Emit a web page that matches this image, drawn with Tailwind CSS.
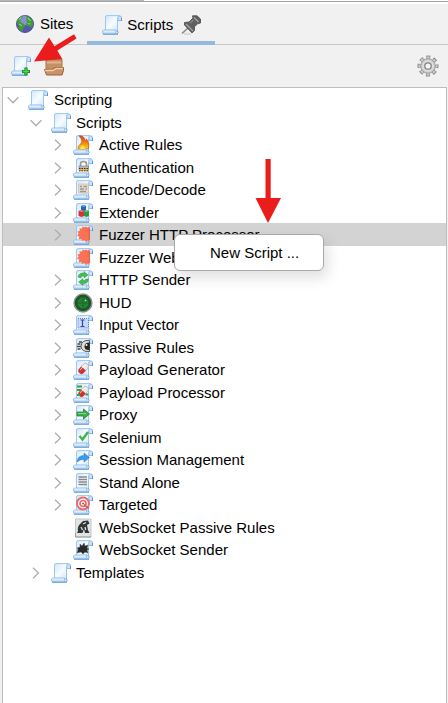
<!DOCTYPE html>
<html lang="en">
<head>
<meta charset="utf-8">
<title>Scripts</title>
<script src="https://cdn.jsdelivr.net/npm/@tailwindcss/browser@4"></script>
</head>
<body class="relative flex min-h-screen flex-col overflow-x-hidden bg-[#f1f1f1] font-['Liberation_Sans',Arial,sans-serif] text-[15px] leading-5 text-black">

<svg class="absolute size-0" aria-hidden="true">
  <defs>
    <linearGradient id="paper" x1="0" y1="0" x2="1" y2="1"><stop offset="0" stop-color="#d3e6f8"/><stop offset=".5" stop-color="#f8fcff"/><stop offset="1" stop-color="#cfe4f8"/></linearGradient>
    <linearGradient id="roll" x1="0" y1="0" x2="0" y2="1"><stop offset="0" stop-color="#ffffff"/><stop offset="1" stop-color="#a9cdf2"/></linearGradient>
    <radialGradient id="radar"><stop offset="0" stop-color="#2f9440"/><stop offset="1" stop-color="#0d4a1c"/></radialGradient>
    <linearGradient id="fire" x1="0" y1="0" x2="0" y2="1"><stop offset="0" stop-color="#d8401c"/><stop offset=".5" stop-color="#ee7d12"/><stop offset="1" stop-color="#ffd51c"/></linearGradient>
  </defs>
  <symbol id="scroll" viewBox="0 0 20 20">
    <path d="M15.500 1h2.500q1.500 0 1.500 2v2.500h-3.500z" fill="#cfe3f8" stroke="#8dbcec"/>
    <path d="M19.500 3v3" stroke="#5b97d3"/>
    <path d="M5 .6h12q-1.500 1-1.500 3V16H3.500V2Q3.500.6 5 .6z" fill="url(#paper)" stroke="#9cc7f0"/>
    <path d="M1.500 15h12.500q-1 2 .5 4H2Q.5 19 .5 17.200T1.500 15z" fill="url(#roll)" stroke="#8dbcec"/>
    <path d="M1 19.300h15M15.500 15.500q1.500 3-.5 3.500" fill="none" stroke="#6ba3da"/>
  </symbol>
  <symbol id="down" viewBox="0 0 12 12"><path d="M.7 3.200 6 8.700 11.300 3.200" fill="none" stroke="#adadad" stroke-width="1.300"/></symbol>
  <symbol id="right" viewBox="0 0 12 12"><path d="M3 .7 8.500 6 3 11.300" fill="none" stroke="#adadad" stroke-width="1.300"/></symbol>
  <symbol id="burst" viewBox="0 0 20 20"><path d="M16.500 1.500v15l-2-1-2 1.500-1-2-2.500 1-.5-2-3 .2.800-2.400-2.300-1 1.500-2-1-2.300 2.300-.7-.3-2.500 2.500.2.500-2 2 .8L13 1.500l1.500 1z" fill="#fb7257"/><path d="M16.300 3v12" stroke="#e24f3a"/></symbol>
  <symbol id="pill" viewBox="0 0 20 20"><g transform="rotate(-48 10.500 8.500)"><rect x="4.500" y="5.500" width="12" height="6" rx="3" fill="#ececec" stroke="#aaa" stroke-width=".7"/><path d="M10.500 5.500h-3a3 3 0 0 0 0 6h3z" fill="#d62d2d"/><path d="M7 7h8" stroke="#fff" stroke-opacity=".6"/></g></symbol>
</svg>

<div class="flex h-1 flex-col bg-white"><div class="h-px w-36 bg-[#b8b8b8]"></div><div class="h-px bg-[#a3a3a3]"></div></div>

<nav class="flex h-[41px] border-b border-[#c9c9c9]" role="tablist">
  <button role="tab" aria-selected="false" class="flex items-center gap-1.5 pr-3.5 pl-4">
    <svg class="size-[18px]" viewBox="0 0 18 18"><circle cx="9" cy="9" r="8.500" fill="#5357b0" stroke="#4a4d94"/><circle cx="8" cy="5.500" r="5" fill="#9a9de0" opacity=".8"/><path d="M1 6Q3 1.500 7 1L6 3.500 4 5.500 5 7.500 8 9l1 2.500-2 2.500-.5 2.500Q3.500 15.500 2 12.500L3.500 11 1 8.500zM10 1q5 .5 7 6v3l-2 2.500-2-1-2-.5-1-2.500L11.500 7 10 5l1-2z" fill="#3f9b37"/><path d="M3 4.500l2.500-2M12 3l2.500 3M11.500 8.500l3 .5M3 9l3 2" stroke="#86d070" stroke-width="1.200"/></svg>
    Sites
  </button>
  <button role="tab" aria-selected="true" class="-mb-px flex items-center border-b-4 border-[#95b9de] pt-1 pr-3.5 pl-[15px]">
    <svg class="mr-[5px] size-5"><use href="#scroll"/></svg>
    Scripts
    <svg class="ml-2 size-5" viewBox="0 0 20 20"><path d="M1 18.500 7 13" stroke="#888" stroke-width="1.600"/><path d="M3 19h7" stroke="#c4c4c4"/><path d="M11.500 .8h4.500L19.500 4v4l-3 .8-3 3v3.700l-2.500 2.500L3.500 10V7.500L8 7l4-4z" fill="#5f5f5f" stroke="#484848" stroke-width=".8"/><path d="M13 2.500l4.500 4.500M5 9l7 7" stroke="#a5a5a5" stroke-width="1.400"/><path d="M9 8l3.500-3" stroke="#858585" stroke-width="1.500"/></svg>
  </button>
</nav>

<div class="flex h-[42px] items-center pr-[9px] pl-[11px]" role="toolbar">
  <button aria-label="New script"><svg class="size-5" viewBox="0 0 20 20"><use href="#scroll"/><path d="M15 11.500v8M11 15.500h8" stroke="#118d22" stroke-width="3.200"/><path d="M15 12.500v6M12 15.500h6" stroke="#48dc50" stroke-width="1.300"/></svg></button>
  <button aria-label="Load script" class="ml-[13px]"><svg class="size-5" viewBox="0 0 20 20"><path d="M2 3h16v10H2z" fill="#c78f65" stroke="#b0764b"/><path d="M3 6.500h14" stroke="#e0b48c" stroke-width="2"/><path d="M.5 13.500 8 14l3-2.500h8.500v3l-1.500 4.500H2.500z" fill="#c99268" stroke="#9b6038"/><path d="M1 14.500h8l3-2h7" fill="none" stroke="#efd0ac" stroke-width="1.300"/></svg></button>
  <button aria-label="Options" class="ml-auto"><svg class="size-[22px]" viewBox="0 0 22 22"><circle cx="11" cy="11" r="8.500" fill="none" stroke="#8b8b8b" stroke-width="4" stroke-dasharray="3.680 3" stroke-dashoffset="1.840"/><circle cx="11" cy="11" r="8.200" fill="none" stroke="#d2d2d2" stroke-width="2.600" stroke-dasharray="2.200 4.240" stroke-dashoffset="1.100"/><circle cx="11" cy="11" r="7.300" fill="#d0d0d0" stroke="#9a9a9a"/><circle cx="11" cy="11" r="5" fill="none" stroke="#e5e5e5"/><circle cx="11" cy="11" r="3.200" fill="#f5f5f5" stroke="#858585" stroke-width="1.300"/></svg></button>
</div>

<main class="mr-px ml-0.5 flex-1 border border-b-0 border-[#bdbdbd] bg-white">
  <ul role="tree" aria-label="Scripts tree" class="grid h-[495px] auto-rows-fr [&>li]:pt-0.5">
    <li role="treeitem" aria-expanded="true" class="flex items-center pl-1"><svg class="mr-[9px] size-3"><use href="#down"/></svg><svg class="mr-1.5 size-5"><use href="#scroll"/></svg>Scripting</li>
    <li role="treeitem" aria-expanded="true" class="flex items-center pl-[27px]"><svg class="mr-[9px] size-3"><use href="#down"/></svg><svg class="mr-[5px] size-5"><use href="#scroll"/></svg>Scripts</li>
    <li role="treeitem" aria-expanded="false" class="flex items-center pl-[49px]"><svg class="mr-[9px] size-3"><use href="#right"/></svg><svg class="mr-1.5 size-5" viewBox="0 0 20 20"><use href="#scroll"/><path d="M6 .8q5-.5 6.500 5 1.200-.3 1-2 3.500 5 2 10H5Q4.500 11 7 9.500 11 6 6 .8z" fill="url(#fire)" stroke="#c9501c" stroke-width=".7"/><path d="M7 14q0-2 3-4 1 2 3 4z" fill="#ffe629"/></svg>Active Rules</li>
    <li role="treeitem" aria-expanded="false" class="flex items-center pl-[49px]"><svg class="mr-[9px] size-3"><use href="#right"/></svg><svg class="mr-1.5 size-5" viewBox="0 0 20 20"><use href="#scroll"/><path d="M7.500 8V6q0-2.500 3-2.500t3 2.500v2" fill="none" stroke="#999" stroke-width="1.600"/><path d="M6 8h9.500v4H6z" fill="#b9b9b9" stroke="#777" stroke-width=".6"/><path d="M6 11h9.500v2H6z" fill="#edb92c"/><path d="M6 10.500h9.500M6 12.800h9.500" stroke="#333" stroke-dasharray="1.500 1"/></svg>Authentication</li>
    <li role="treeitem" aria-expanded="false" class="flex items-center pl-[49px]"><svg class="mr-[9px] size-3"><use href="#right"/></svg><svg class="mr-1.5 size-5" viewBox="0 0 20 20"><use href="#scroll"/><path d="M5.500 4h10v9h-10z" fill="#e3dcd2" stroke="#cdc4b8"/><path d="M7 6.500h2M10.500 6.500H14M7 9h4M12.500 9H14M7 11.500h6" stroke="#9d968d" stroke-width="1.300"/></svg>Encode/Decode</li>
    <li role="treeitem" aria-expanded="false" class="flex items-center pl-[49px]"><svg class="mr-[9px] size-3"><use href="#right"/></svg><svg class="mr-1.5 size-5" viewBox="0 0 20 20"><use href="#scroll"/><path d="M8 3l2.500-1L13 3v4.500l-2.500 1L8 7.500z" fill="#2367b7"/><path d="M8 3l2.500 1L13 3l-2.500-1z" fill="#69a4df"/><path d="M5.500 8l3-1 3 1v5l-3 1-3-1z" fill="#cf3440"/><path d="M5.500 8l3 1 3-1-3-1z" fill="#ea7d80"/><path d="M11 8l2.500-1L16 8v5l-2.500 1-2.500-1z" fill="#2c9b38"/><path d="M11 8l2.500 1L16 8l-2.500-1z" fill="#77cf79"/></svg>Extender</li>
    <li role="treeitem" aria-expanded="false" aria-selected="true" class="flex items-center bg-[#d3d3d3] pl-[49px]"><svg class="mr-[9px] size-3"><use href="#right"/></svg><svg class="mr-1.5 size-5" viewBox="0 0 20 20"><use href="#scroll"/><use href="#burst"/></svg>Fuzzer HTTP Processor</li>
    <li role="treeitem" class="flex items-center pl-[70px]"><svg class="mr-1.5 size-5" viewBox="0 0 20 20"><use href="#scroll"/><use href="#burst"/></svg>Fuzzer WebSocket Processor</li>
    <li role="treeitem" aria-expanded="false" class="flex items-center pl-[49px]"><svg class="mr-[9px] size-3"><use href="#right"/></svg><svg class="mr-1.5 size-5" viewBox="0 0 20 20"><use href="#scroll"/><path d="M5 7q1-4.500 6-4V1.500L15 5l-4 3V6Q8 5.500 8 8zM15.500 9q-.5 5-5.500 4.500v2L5.500 12 10 8.500v2q2.500.5 2.800-1.500z" fill="#46ba55" stroke="#2c973f" stroke-width=".5"/></svg>HTTP Sender</li>
    <li role="treeitem" aria-expanded="false" class="flex items-center pl-[49px]"><svg class="mr-[9px] size-3"><use href="#right"/></svg><svg class="mr-1.5 size-5" viewBox="0 0 20 20"><circle cx="10" cy="10" r="8.900" fill="url(#radar)" stroke="#8e8e8e" stroke-width="1.500"/><circle cx="10" cy="10" r="4.500" fill="none" stroke="#4aa85c" stroke-width=".6"/><path d="M10 2v16M2 10h16" stroke="#165c24" stroke-width=".8"/><circle cx="12.500" cy="7.500" r=".8" fill="#9aef9d"/></svg>HUD</li>
    <li role="treeitem" aria-expanded="false" class="flex items-center pl-[49px]"><svg class="mr-[9px] size-3"><use href="#right"/></svg><svg class="mr-1.5 size-5" viewBox="0 0 20 20"><use href="#scroll"/><path d="M5 3.500h10.500v9.500H5z" fill="#c9d9ff" stroke="#5f78d8" stroke-dasharray="1 1"/><path d="M7.500 5h4M9.500 5v6.500M7.500 11.500h4" stroke="#3448a5" stroke-width="1.200"/></svg>Input Vector</li>
    <li role="treeitem" aria-expanded="false" class="flex items-center pl-[49px]"><svg class="mr-[9px] size-3"><use href="#right"/></svg><svg class="mr-1.5 size-5" viewBox="0 0 20 20"><use href="#scroll"/><path d="M6 4l3 0M4.500 6h3M4 8.500h4M4.500 11h3" stroke="#444" stroke-width="1.300"/><path d="M16.500 2.500q-8-1-8.500 6Q8.500 14 16.500 13.500z" fill="#dedede" stroke="#555"/><path d="M16.500 4.500q-5 0-5 4t5 3.500z" fill="#252525"/><circle cx="13.500" cy="7" r="1" fill="#fff"/></svg>Passive Rules</li>
    <li role="treeitem" aria-expanded="false" class="flex items-center pl-[49px]"><svg class="mr-[9px] size-3"><use href="#right"/></svg><svg class="mr-1.5 size-5" viewBox="0 0 20 20"><use href="#scroll"/><use href="#pill"/></svg>Payload Generator</li>
    <li role="treeitem" aria-expanded="false" class="flex items-center pl-[49px]"><svg class="mr-[9px] size-3"><use href="#right"/></svg><svg class="mr-1.5 size-5" viewBox="0 0 20 20"><use href="#scroll"/><use href="#pill"/><path d="M4 3.500h5M4 7h4M4 12h3M12.500 11.500h3" stroke="#31a443" stroke-width="2.200"/></svg>Payload Processor</li>
    <li role="treeitem" aria-expanded="false" class="flex items-center pl-[49px]"><svg class="mr-[9px] size-3"><use href="#right"/></svg><svg class="mr-1.5 size-5" viewBox="0 0 20 20"><use href="#scroll"/><path d="M4 7h6.500V4L16.500 9l-6 5v-3H4z" fill="#3cb14a" stroke="#238033" stroke-width=".8"/><path d="M5 8.500h8" stroke="#83d68a"/></svg>Proxy</li>
    <li role="treeitem" aria-expanded="false" class="flex items-center pl-[49px]"><svg class="mr-[9px] size-3"><use href="#right"/></svg><svg class="mr-1.5 size-5" viewBox="0 0 20 20"><use href="#scroll"/><path d="M6.500 8 9.500 11.500 15 4" fill="none" stroke="#43b348" stroke-width="2.400"/></svg>Selenium</li>
    <li role="treeitem" aria-expanded="false" class="flex items-center pl-[49px]"><svg class="mr-[9px] size-3"><use href="#right"/></svg><svg class="mr-1.5 size-5" viewBox="0 0 20 20"><use href="#scroll"/><path d="M4 12Q4.500 5.500 11 5.500V3L16.500 7.500 11 12V9.500Q7 9 4 12z" fill="#3c9aea" stroke="#2b85d2" stroke-width=".6"/></svg>Session Management</li>
    <li role="treeitem" aria-expanded="false" class="flex items-center pl-[49px]"><svg class="mr-[9px] size-3"><use href="#right"/></svg><svg class="mr-1.5 size-5" viewBox="0 0 20 20"><use href="#scroll"/><path d="M5.500 4H14M5.500 6.500H14M5.500 9H14M5.500 11.500H14" stroke="#888" stroke-width="1.400"/></svg>Stand Alone</li>
    <li role="treeitem" aria-expanded="false" class="flex items-center pl-[49px]"><svg class="mr-[9px] size-3"><use href="#right"/></svg><svg class="mr-1.5 size-5" viewBox="0 0 20 20"><use href="#scroll"/><circle cx="10" cy="8.500" r="6" fill="#fff" stroke="#ec6a6e" stroke-width="2"/><circle cx="10" cy="8.500" r="3" fill="#fff" stroke="#ec6a6e" stroke-width="1.700"/><circle cx="10" cy="8.500" r="1" fill="#d8383d"/><path d="M11 9.500l5 4" stroke="#a66" stroke-width="1.200"/></svg>Targeted</li>
    <li role="treeitem" class="flex items-center pl-[70px]"><svg class="mr-1.5 size-5" viewBox="0 0 20 20"><path d="M2.500 1h15.500v18H2.500z" fill="#dfe5e5" stroke="#c3c8c9"/><path d="M2.500 15v4H18" fill="none" stroke="#999"/><path d="M5 13q-1-5 3-8l2-2 5-.5 1.500 3L14 7l1 5 1.500 3H12l-1-4-1.500 4H4z" fill="#343434"/><path d="M10 6l3-1.500M8 9l1.500 3M12 9l.8 3" stroke="#ddd" stroke-width="1.300"/></svg>WebSocket Passive Rules</li>
    <li role="treeitem" class="flex items-center pl-[70px]"><svg class="mr-1.5 size-5" viewBox="0 0 20 20"><use href="#scroll"/><path d="M4 13l1-4-1-1 3-1V4l2 2 2-3 1 3 3-1-1 3 2 1-2 1 1 3-3-1-2 2-2-2z" fill="#292929" stroke="#555" stroke-width=".5"/></svg>WebSocket Sender</li>
    <li role="treeitem" aria-expanded="false" class="flex items-center pl-[27px]"><svg class="mr-[9px] size-3"><use href="#right"/></svg><svg class="mr-[5px] size-5"><use href="#scroll"/></svg>Templates</li>
  </ul>
</main>

<!-- Context menu for the selected node -->
<div role="menu" class="absolute top-[234px] left-[174px] flex h-[37px] w-[150px] rounded-md border border-[#a9a9a9] bg-white shadow-[4px_7px_14px_rgba(0,0,0,0.12)]">
  <button role="menuitem" class="flex-1 pl-[35px] text-left">New Script ...</button>
</div>

<!-- Callout arrows -->
<svg class="pointer-events-none absolute top-[34px] left-[34px] h-7 w-[43px]" viewBox="0 0 43 28" aria-hidden="true"><path d="M0 27.500 15 3.500l5.500 8.800L40 .2l2.500 4.200L23.300 16.600l5 8.400z" fill="#ea1c1c"/></svg>
<svg class="pointer-events-none absolute top-[159px] left-[255px] h-16 w-[26px]" viewBox="0 0 26 64" aria-hidden="true"><path d="M10.500 0h5.200v39H26L13 64 .5 39h10z" fill="#ea1c1c"/></svg>
</body>
</html>
